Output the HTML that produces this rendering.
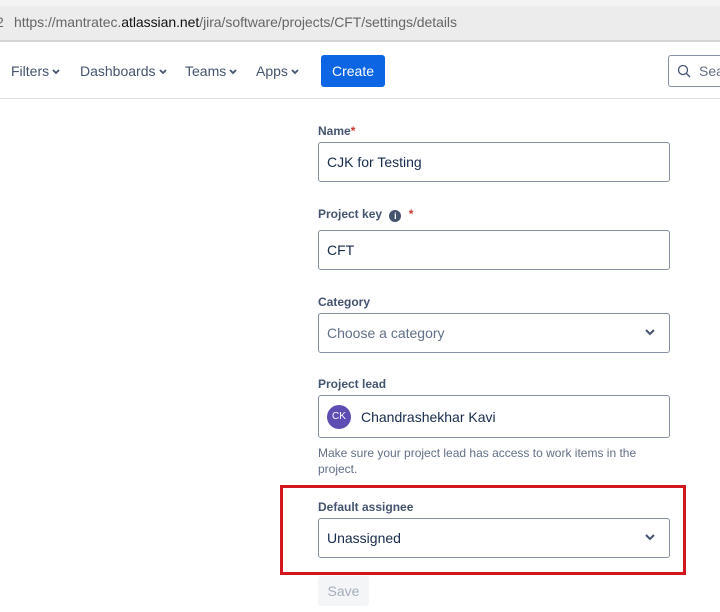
<!DOCTYPE html>
<html><head><style>
*{margin:0;padding:0;box-sizing:border-box}
body{width:720px;height:612px;background:#fff;font-family:"Liberation Sans",sans-serif;position:relative;overflow:hidden;color:#172b4d}
.a{position:absolute}
.lbl{position:absolute;left:318px;font-size:12px;font-weight:bold;color:#44546f}
.inp{position:absolute;left:318px;width:352px;height:40px;border:1px solid #8590a2;border-radius:3px;font-size:14px;padding-left:8px;display:flex;align-items:center;color:#172b4d}
.nav{position:absolute;top:63px;font-size:14px;color:#44546f}
.nav svg{margin-left:3px;vertical-align:1px}
.chev{position:absolute;right:14px;top:14px}
</style></head><body>
<div class="a" style="left:0;top:0;width:720px;height:6px;background:#f4f4f4"></div>
<div class="a" style="left:0;top:6px;width:720px;height:34px;background:#ececec"></div>
<div class="a" style="left:0;top:40px;width:720px;height:2px;background:#d4d4d4"></div>
<div class="a" style="left:-4px;top:14px;font-size:14px;color:#666">2</div>
<div class="a" style="left:14px;top:14px;font-size:14px;color:#666;letter-spacing:-0.05px">https://mantratec.<span style="color:#111">atlassian.net</span>/jira/software/projects/CFT/settings/details</div>
<div class="nav" style="left:11px">Filters<svg width="8" height="6"><path d="M1 1l3 3 3-3" fill="none" stroke="#44546f" stroke-width="1.8"/></svg></div>
<div class="nav" style="left:80px">Dashboards<svg width="8" height="6"><path d="M1 1l3 3 3-3" fill="none" stroke="#44546f" stroke-width="1.8"/></svg></div>
<div class="nav" style="left:185px">Teams<svg width="8" height="6"><path d="M1 1l3 3 3-3" fill="none" stroke="#44546f" stroke-width="1.8"/></svg></div>
<div class="nav" style="left:256px">Apps<svg width="8" height="6"><path d="M1 1l3 3 3-3" fill="none" stroke="#44546f" stroke-width="1.8"/></svg></div>
<div class="a" style="left:321px;top:55px;width:64px;height:32px;background:#0c66e4;border-radius:3px;color:#fff;font-size:14px;display:flex;align-items:center;justify-content:center">Create</div>
<div class="a" style="left:668px;top:55px;width:70px;height:32px;border:1px solid #8590a2;border-radius:3px;font-size:14px;color:#626f86;padding:7px 0 0 30px">Sea</div>
<svg class="a" style="left:677px;top:64px" width="14" height="14"><circle cx="6" cy="6" r="4.5" fill="none" stroke="#44546f" stroke-width="1.3"/><line x1="9.5" y1="9.5" x2="13" y2="13" stroke="#44546f" stroke-width="1.3"/></svg>
<div class="a" style="left:0;top:98px;width:720px;height:1px;background:#dcdfe4"></div>

<div class="lbl" style="top:124px">Name<span style="color:#c9372c">*</span></div>
<div class="inp" style="top:142px">CJK for Testing</div>
<div class="lbl" style="top:207px">Project key <span style="display:inline-block;width:12px;height:12px;border-radius:50%;background:#44546f;color:#fff;font-size:9px;text-align:center;line-height:12px;vertical-align:-1px;margin:0 4px">i</span> <span style="color:#c9372c">*</span></div>
<div class="inp" style="top:230px">CFT</div>
<div class="lbl" style="top:295px">Category</div>
<div class="inp" style="top:313px;color:#626f86">Choose a category<svg class="chev" width="10" height="8"><path d="M1 2l4 4 4-4" fill="none" stroke="#44546f" stroke-width="2"/></svg></div>
<div class="lbl" style="top:377px">Project lead</div>
<div class="inp" style="top:395px;height:43px"><span style="width:24px;height:24px;border-radius:50%;background:#5e4db2;color:#fff;font-size:10px;display:inline-flex;align-items:center;justify-content:center;margin-right:10px">CK</span>Chandrashekhar Kavi</div>
<div class="a" style="left:318px;top:445px;font-size:12px;color:#626f86;width:340px;line-height:16px">Make sure your project lead has access to work items in the project.</div>
<div class="a" style="left:280px;top:485px;width:406px;height:90px;border:3px solid #d2161e"></div>
<div class="lbl" style="top:500px">Default assignee</div>
<div class="inp" style="top:518px">Unassigned<svg class="chev" width="10" height="8"><path d="M1 2l4 4 4-4" fill="none" stroke="#44546f" stroke-width="2"/></svg></div>
<div class="a" style="left:318px;top:576px;width:51px;height:30px;background:#f4f5f7;border-radius:3px;color:#a5adba;font-size:14px;display:flex;align-items:center;justify-content:center">Save</div>
</body></html>
